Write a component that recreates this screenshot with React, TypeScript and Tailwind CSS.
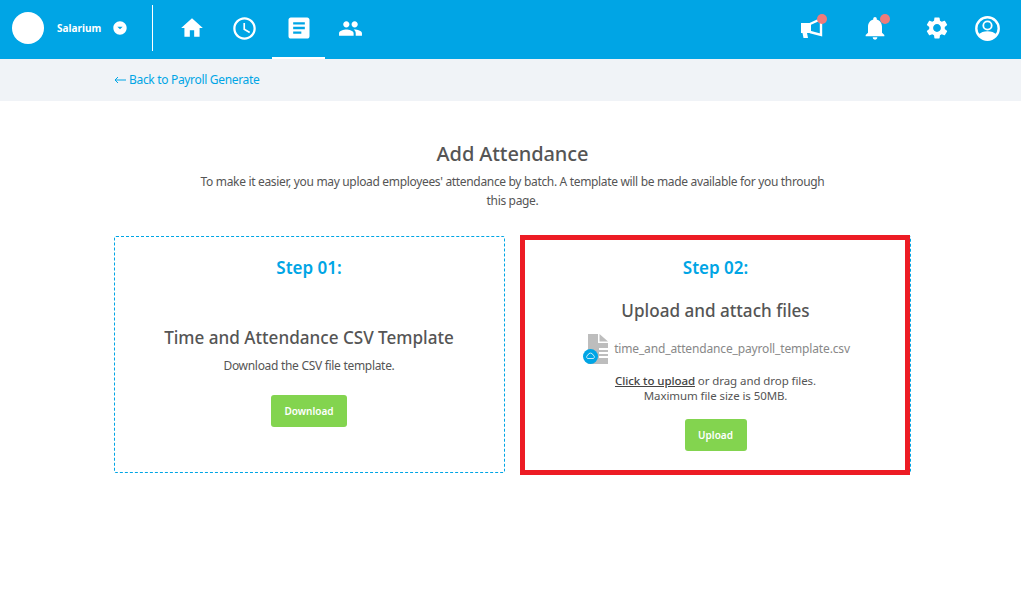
import React from 'react';
import {
  MdHome,
  MdAccessTime,
  MdArticle,
  MdPeople,
  MdNotifications,
  MdSettings,
  MdArrowDropDownCircle,
} from 'react-icons/md';

const font = { fontFamily: '"Noto Sans", sans-serif' };

// file with a small cloud badge
const FileIcon: React.FC = () => (
  <svg width="25" height="30" viewBox="0 0 25 30" className="shrink-0">
    <path d="M5 0h10v9h10v21H5z" fill="#bdbdbd" />
    <path d="M16.500 0l8.500 7.500h-8.500z" fill="#bdbdbd" />
    <rect x="16" y="14" width="9" height="2" fill="#fff" />
    <rect x="16" y="18" width="9" height="2" fill="#fff" />
    <rect x="16" y="22" width="9" height="2" fill="#fff" />
    <circle cx="7.500" cy="22.500" r="7.500" fill="#00a5e5" />
    <path d="M4.500 24.500a2 2 0 0 1 .5-3.500 2.600 2.600 0 0 1 5 0 2 2 0 0 1 .5 3.500z" fill="none" stroke="#fff" strokeWidth="1" opacity="0.75" />
  </svg>
);

const Megaphone: React.FC = () => (
  <svg width="24" height="20" viewBox="0 0 24 20" fill="none">
    <path d="M1 5h10v10H7l1 5H3.500l-1-5H1z" fill="#fff" />
    <path d="M10 6l11-5v16l-11-3" stroke="#fff" strokeWidth="2.400" />
  </svg>
);

const Account: React.FC = () => (
  <svg width="25" height="25" viewBox="0 0 25 25" fill="none">
    <circle cx="12.500" cy="12.500" r="11.200" stroke="#fff" strokeWidth="2.400" />
    <circle cx="12.500" cy="9.500" r="4.200" stroke="#fff" strokeWidth="1.800" />
    <path d="M3.500 19c2-3 5.500-3.800 9-3.800s7 .8 9 3.800c-2 3-5.500 5-9 5s-7-2-9-5z" fill="#fff" />
  </svg>
);

const BackArrow: React.FC = () => (
  <svg width="12" height="8" viewBox="0 0 12 8" fill="none" className="mr-[3px]">
    <path d="M12 4H1M4 1L1 4l3 3" stroke="#00a5e5" strokeWidth="1" />
  </svg>
);

export default function App() {
  return (
    <div className="min-h-[603px] bg-white text-[#555]" style={font}>
      <header className="h-[59px] bg-[#00a5e5] flex items-center pl-3 pr-[21px] pb-[3px] text-white">
        <div className="w-8 h-8 rounded-full bg-white" />
        <span className="ml-[13px] text-[10px] font-bold leading-none">Salarium</span>
        <MdArrowDropDownCircle size={16} className="ml-[11px]" />
        <div className="ml-6 w-px h-[46px] bg-white" />
        <nav className="flex h-[59px] -mb-[3px] ml-[12px]">
          <div className="w-[53px] pb-[3px] flex items-center justify-center"><MdHome size={26} /></div>
          <div className="w-[53px] pb-[3px] flex items-center justify-center"><MdAccessTime size={27} /></div>
          <div className="w-[53px] ml-px pt-[2px] pb-[3px] flex items-center justify-center border-b-2 border-white"><MdArticle size={28} /></div>
          <div className="w-[51px] pb-[3px] flex items-center justify-center"><MdPeople size={25} /></div>
        </nav>
        <div className="ml-auto flex items-center">
          <div className="relative">
            <Megaphone />
            <span className="absolute right-[-3px] top-[-4px] w-[10px] h-[10px] rounded-full bg-[#ee7b7b]" />
          </div>
          <div className="relative ml-[37px]">
            <MdNotifications size={28} />
            <span className="absolute right-[-1px] top-0 w-[10px] h-[10px] rounded-full bg-[#ee7b7b]" />
          </div>
          <MdSettings size={26} className="ml-[35px]" />
          <div className="ml-[25px]"><Account /></div>
        </div>
      </header>

      <div className="h-[42px] bg-[#f0f3f7] flex items-center pl-[114px] text-[12px] tracking-[-0.32px] text-[#00a5e5]">
        <BackArrow />
        Back to Payroll Generate
      </div>

      <main className="pl-[114px] pr-[110px]">
        <div className="pt-[39px] text-center">
          <h1 className="text-[20px] tracking-[-0.1px] font-medium leading-[27px]">Add Attendance</h1>
          <p className="mx-auto mt-[5px] w-[640px] text-[12px] tracking-[-0.33px] leading-[19px]">
            To make it easier, you may upload employees' attendance by batch. A template will be made available for you through this page.
          </p>
        </div>

        <div className="mt-[26px] flex gap-[16px] text-center">
          <section className="w-[391px] shrink-0 h-[237px] border border-dashed border-[#00a5e5] rounded-[2px] pt-[20px] pr-px flex flex-col items-center">
            <h2 className="text-[17px] font-semibold leading-[22px] text-[#00a5e5]">Step 01:</h2>
            <h3 className="mt-[46px] text-[17.100px] font-medium leading-[25px]">Time and Attendance CSV Template</h3>
            <p className="mt-[7px] text-[12px] tracking-[-0.3px] leading-[18px]">Download the CSV file template.</p>
            <button className="mt-[20px] w-[76px] h-[32px] rounded-[3px] bg-[#83d44f] text-white text-[10px] font-semibold">Download</button>
          </section>

          <section className="relative w-[390px] shrink-0 h-[237px] border border-dashed border-[#00a5e5] rounded-[2px] pt-[20px] pr-px flex flex-col items-center">
            <h2 className="text-[17px] font-semibold leading-[22px] text-[#00a5e5]">Step 02:</h2>
            <h3 className="mt-[19px] text-[17.100px] font-medium leading-[25px]">Upload and attach files</h3>
            <div className="mt-[11px] ml-[2px] flex items-center gap-[6px]">
              <FileIcon />
              <span className="text-[12px] tracking-[-0.15px] text-[#888]">time_and_attendance_payroll_template.csv</span>
            </div>
            <p className="mt-[9px] text-[11.500px] tracking-[-0.08px] leading-[15px]">
              <span className="underline font-medium text-[#444]">Click to upload</span> or drag and drop files.
              <br />
              Maximum file size is 50MB.
            </p>
            <button className="mt-[16px] w-[62px] h-[32px] rounded-[3px] bg-[#83d44f] text-white text-[10px] font-semibold">Upload</button>
            <div className="absolute left-[-2px] top-[-2px] w-[390px] h-[240px] border-[5px] border-[#ed1c24]" />
          </section>
        </div>
      </main>
    </div>
  );
}
